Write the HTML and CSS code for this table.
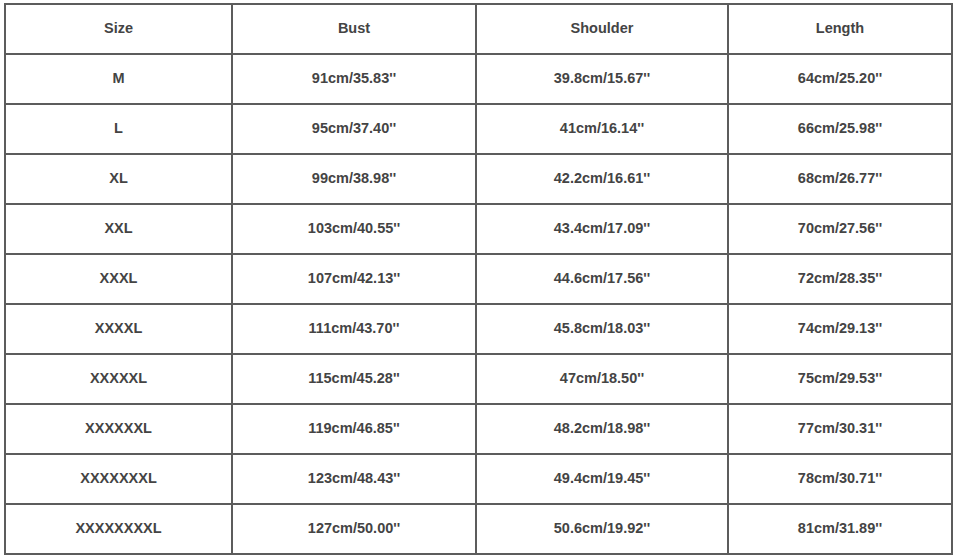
FILE: index.html
```html
<!DOCTYPE html>
<html>
<head>
<meta charset="utf-8">
<link rel="stylesheet" href="styles.css">
</head>
<body>
<table class="size-table">
  <colgroup>
    <col class="c1"><col class="c2"><col class="c3"><col class="c4">
  </colgroup>
  <tr><td>Size</td><td>Bust</td><td>Shoulder</td><td>Length</td></tr>
  <tr><td>M</td><td>91cm/35.83''</td><td>39.8cm/15.67''</td><td>64cm/25.20''</td></tr>
  <tr><td>L</td><td>95cm/37.40''</td><td>41cm/16.14''</td><td>66cm/25.98''</td></tr>
  <tr><td>XL</td><td>99cm/38.98''</td><td>42.2cm/16.61''</td><td>68cm/26.77''</td></tr>
  <tr><td>XXL</td><td>103cm/40.55''</td><td>43.4cm/17.09''</td><td>70cm/27.56''</td></tr>
  <tr><td>XXXL</td><td>107cm/42.13''</td><td>44.6cm/17.56''</td><td>72cm/28.35''</td></tr>
  <tr><td>XXXXL</td><td>111cm/43.70''</td><td>45.8cm/18.03''</td><td>74cm/29.13''</td></tr>
  <tr><td>XXXXXL</td><td>115cm/45.28''</td><td>47cm/18.50''</td><td>75cm/29.53''</td></tr>
  <tr><td>XXXXXXL</td><td>119cm/46.85''</td><td>48.2cm/18.98''</td><td>77cm/30.31''</td></tr>
  <tr><td>XXXXXXXL</td><td>123cm/48.43''</td><td>49.4cm/19.45''</td><td>78cm/30.71''</td></tr>
  <tr><td>XXXXXXXXL</td><td>127cm/50.00''</td><td>50.6cm/19.92''</td><td>81cm/31.89''</td></tr>
</table>
</body>
</html>
```
FILE: styles.css
```css
html, body {
  margin: 0;
  padding: 0;
  background: #ffffff;
}
body {
  padding: 3px 0 0 4px;
  font-family: "Liberation Sans", Arial, sans-serif;
}
.size-table {
  border-collapse: collapse;
  table-layout: fixed;
  width: 947px;
}
.c1 { width: 227px; }
.c2 { width: 244px; }
.c3 { width: 252px; }
.c4 { width: 224px; }
.size-table td {
  border: 2px solid #5c5c5c;
  height: 46px;
  padding: 0 0 2px 0;
  text-align: center;
  vertical-align: middle;
  font-size: 14.5px;
  font-weight: bold;
  color: #444444;
}
```
